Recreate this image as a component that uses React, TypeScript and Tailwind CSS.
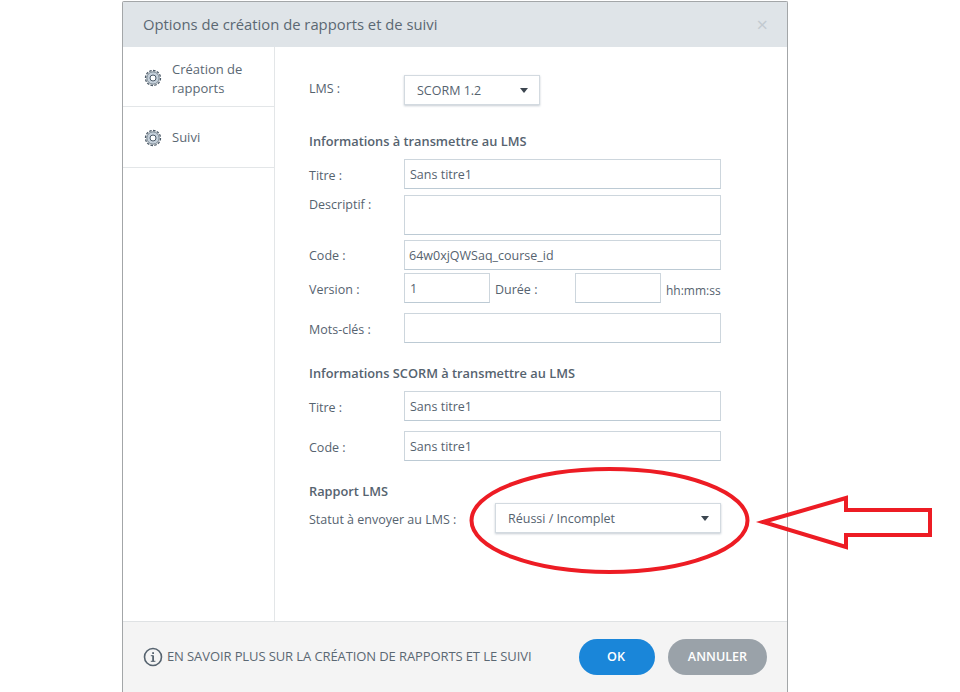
import type { ReactNode } from 'react';

function Gear() {
  return (
    <svg width="18" height="18" viewBox="0 0 18 18" className="shrink-0">
      <circle cx="9" cy="9" r="6.2" fill="#c5d0da" stroke="#5a6976" strokeWidth="0.8" />
      <circle cx="9" cy="9" r="7.5" fill="none" stroke="#4b5a68" strokeWidth="1.3" strokeDasharray="2.6 1.3" />
      <circle cx="9" cy="9" r="3" fill="#fff" stroke="#4b5a68" strokeWidth="1" />
    </svg>
  );
}

function Caret() {
  return <span className="w-0 h-0 border-l-[4px] border-r-[4px] border-t-[5px] border-l-transparent border-r-transparent border-t-[#3c4650]" />;
}

function Field({ value, className }: { value?: string; className?: string }) {
  return (
    <div className={`h-[30px] border border-[#cdd6dd] border-b-[#bccad4] bg-white px-[5px] leading-[29px] text-[#56636f] ${className ?? ''}`}>
      {value}
    </div>
  );
}

function Row({ label, children, className, labelClass }: { label: string; children: ReactNode; className?: string; labelClass?: string }) {
  return (
    <div className={`flex items-center ${className ?? ''}`}>
      <span className={`w-[95px] shrink-0 text-[#56636f] ${labelClass ?? 'pt-[5px]'}`}>{label}</span>
      {children}
    </div>
  );
}

export default function App() {
  return (
    <div className="relative h-[692px] w-[960px] overflow-hidden bg-white text-[12.5px] font-['Open_Sans',sans-serif] text-[#56636f]">
      <div className="ml-[122px] mt-px flex h-[691px] w-[666px] flex-col rounded-t-[2px] border-x border-t border-[#a3a6a8]">
        <div className="flex h-[45px] shrink-0 items-center justify-between bg-[#dfe4e8] pl-5 pr-[19px]">
          <span className="text-[14.8px] text-[#5b6873]">Options de création de rapports et de suivi</span>
          <span className="text-[20px] leading-none text-[#c3cad0]">×</span>
        </div>

        <div className="flex min-h-0 flex-1">
          <div className="w-[152px] shrink-0 border-r border-[#e3e6e8]">
            <div className="flex h-[60px] items-center gap-[10px] border-b border-[#e3e6e8] pt-[2px] pl-[21px]">
              <Gear />
              <span className="pt-[2px] text-[13px] leading-[19px] font-medium text-[#5b6873]">Création de<br />rapports</span>
            </div>
            <div className="flex h-[61px] items-center gap-[10px] border-b border-[#e3e6e8] pt-[2px] pl-[21px]">
              <Gear />
              <span className="text-[13px] text-[#5b6873]">Suivi</span>
            </div>
          </div>

          <div className="flex-1 pl-[34px] pt-[28px]">
            <Row label="LMS :" labelClass="pb-[2px]">
              <div className="flex h-[30px] w-[136px] items-center justify-between border border-[#d3dae0] pl-3 pr-[11px] shadow-[0_1px_2px_rgba(90,110,130,0.35)]">
                <span className="pt-[3px]">SCORM 1.2</span>
                <Caret />
              </div>
            </Row>

            <div className="mt-[26px] h-[20px] text-[12.8px] leading-[20px] font-semibold">Informations à transmettre au LMS</div>
            <Row label="Titre :" className="mt-[8px] w-[412px]">
              <Field value="Sans titre1" className="flex-1" />
            </Row>
            <div className="mt-[6px] flex w-[412px]">
              <span className="w-[95px] shrink-0 pt-px leading-[18px]">Descriptif :</span>
              <Field className="!h-[40px] flex-1" />
            </div>
            <Row label="Code :" labelClass="pt-[3px]" className="mt-[5px] w-[412px]">
              <Field value="64w0xjQWSaq_course_id" className="flex-1 !px-[4px]" />
            </Row>
            <Row label="Version :" className="mt-[3px]">
              <Field value="1" className="w-[86px]" />
              <span className="ml-[5px] w-[80px] pt-[5px]">Durée :</span>
              <Field className="w-[86px]" />
              <span className="ml-[5px] pt-[5px] text-[12px]">hh:mm:ss</span>
            </Row>
            <Row label="Mots-clés :" className="mt-[10px] w-[412px]">
              <Field className="flex-1" />
            </Row>

            <div className="mt-[20px] h-[20px] text-[12.8px] leading-[20px] font-semibold">Informations SCORM à transmettre au LMS</div>
            <Row label="Titre :" className="mt-[8px] w-[412px]">
              <Field value="Sans titre1" className="flex-1" />
            </Row>
            <Row label="Code :" className="mt-[10px] w-[412px]">
              <Field value="Sans titre1" className="flex-1" />
            </Row>

            <div className="mt-[20px] h-[20px] text-[12.8px] leading-[20px] font-semibold">Rapport LMS</div>
            <div className="mt-[2px] flex w-[412px] items-center justify-between">
              <span className="pt-[4px]">Statut à envoyer au LMS :</span>
              <div className="flex h-[30px] w-[226px] items-center justify-between border border-[#d3dae0] pl-3 pr-[11px] shadow-[0_1px_2px_rgba(90,110,130,0.35)]">
                <span className="pt-[3px]">Réussi / Incomplet</span>
                <Caret />
              </div>
            </div>
          </div>
        </div>

        <div className="flex h-[71px] shrink-0 items-center justify-between border-t border-[#dfe2e4] bg-[#f4f4f4] pl-5 pr-5">
          <div className="flex items-center gap-[4px]">
            <svg width="20" height="20" viewBox="0 0 20 20" className="shrink-0">
              <circle cx="10" cy="10" r="8.5" fill="none" stroke="#56636f" strokeWidth="1.6" />
              <rect x="9.2" y="8.5" width="1.8" height="6" fill="#56636f" />
              <rect x="7.8" y="8.2" width="2.4" height="1" fill="#56636f" />
              <rect x="7.8" y="13.8" width="4.6" height="1" fill="#56636f" />
              <rect x="9.2" y="5.2" width="1.8" height="1.8" fill="#56636f" />
            </svg>
            <span className="text-[13px] tracking-[-0.1px] text-[#5b6873]">EN SAVOIR PLUS SUR LA CRÉATION DE RAPPORTS ET LE SUIVI</span>
          </div>
          <div className="flex gap-[13px]">
            <button className="h-9 w-[76px] rounded-[18px] bg-[#1a86d9] pr-[2px] pt-px text-[12.6px] font-semibold text-white">OK</button>
            <button className="h-9 w-[99px] rounded-[18px] bg-[#9aa2a9] pt-px text-[12.6px] font-semibold text-white">ANNULER</button>
          </div>
        </div>
      </div>

      {/* annotation drawn on top of the screenshot */}
      <svg width="960" height="692" viewBox="0 0 960 692" className="pointer-events-none absolute left-0 top-0">
        <ellipse cx="609.5" cy="520.5" rx="138" ry="51.5" fill="none" stroke="#ed1c24" strokeWidth="4" />
        <path d="M763 522 L846 498 L846 510 L930 510 L930 535 L846 535 L846 547 Z" fill="none" stroke="#ed1c24" strokeWidth="4" />
      </svg>
    </div>
  );
}
